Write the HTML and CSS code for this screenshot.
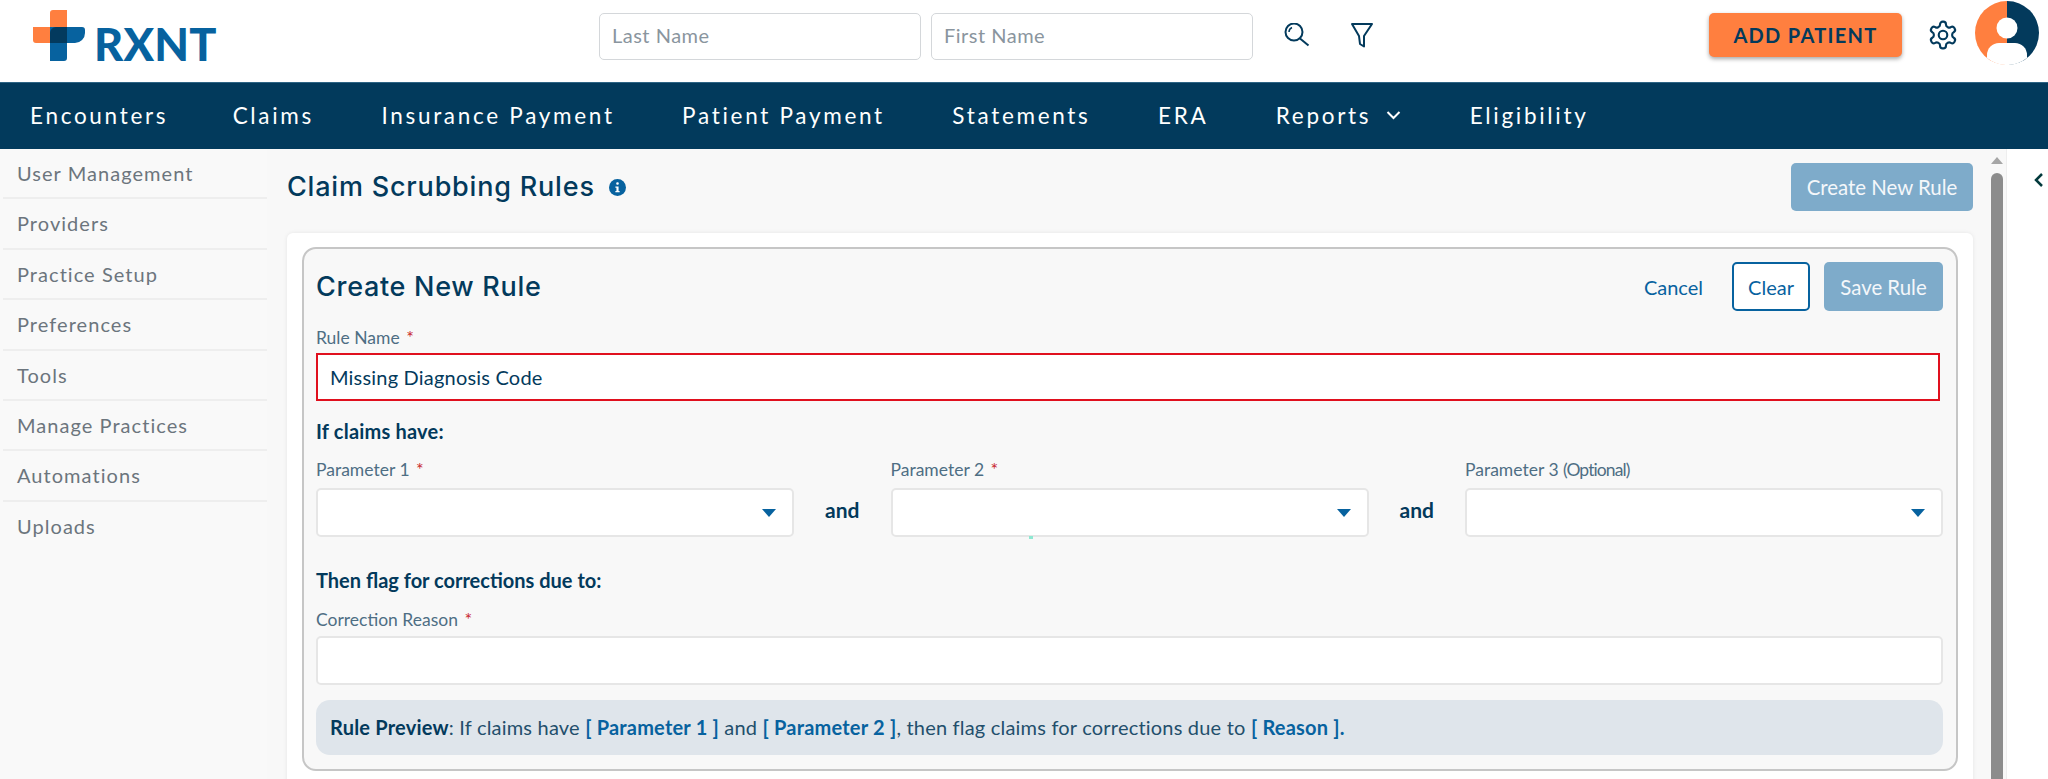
FILE: index.html
```html
<!DOCTYPE html>
<html lang="en">
<head>
<meta charset="utf-8">
<title>Claim Scrubbing Rules</title>
<link rel="stylesheet" href="styles.css">
</head>
<body>
<header class="topbar">
  <div class="logo">
    <svg class="logo-mark" width="52" height="51" viewBox="0 0 52 51">
      <path d="M17 3a3 3 0 0 1 3-3h14v33H3a3 3 0 0 1-3-3V17h17z" fill="#ff7f3f"/>
      <path d="M17 17h32a3 3 0 0 1 3 3v3a10 10 0 0 1-10 10h-8v15a3 3 0 0 1-3 3H17z" fill="#07629f"/>
      <path d="M17 23a6 6 0 0 1 6-6h11v16H17z" fill="#033a5e"/>
    </svg>
    <span class="logo-text">RXNT</span>
  </div>
  <div class="search">
    <input class="search-input" placeholder="Last Name">
    <input class="search-input" placeholder="First Name">
    <svg class="icon-search" width="28" height="28" viewBox="0 0 28 28" fill="none" stroke="#033a5c" stroke-width="2">
      <circle cx="12" cy="9" r="8.500"/><path d="M18 15.500l8.500 7"/><path d="M7 9a5 5 0 0 1 3-4.500" stroke-width="1.500"/>
    </svg>
    <svg class="icon-filter" width="24" height="28" viewBox="0 0 24 28" fill="none" stroke="#033a5c" stroke-width="2" stroke-linejoin="round">
      <path d="M2 1h20l-8 12v10.500l-4-2.500-1-8z"/>
    </svg>
  </div>
  <div class="top-actions">
    <button class="add-patient">ADD PATIENT</button>
    <svg class="icon-gear" width="32" height="32" viewBox="0 0 24 24" fill="none" stroke="#033a5c" stroke-width="1.600" stroke-linejoin="round">
      <path d="M12.220 2h-.44a2 2 0 0 0-2 2v.18a2 2 0 0 1-1 1.730l-.43.25a2 2 0 0 1-2 0l-.15-.08a2 2 0 0 0-2.730.73l-.22.38a2 2 0 0 0 .73 2.730l.15.1a2 2 0 0 1 1 1.720v.51a2 2 0 0 1-1 1.740l-.15.09a2 2 0 0 0-.73 2.730l.22.38a2 2 0 0 0 2.730.73l.15-.08a2 2 0 0 1 2 0l.43.25a2 2 0 0 1 1 1.730V20a2 2 0 0 0 2 2h.44a2 2 0 0 0 2-2v-.18a2 2 0 0 1 1-1.730l.43-.25a2 2 0 0 1 2 0l.15.08a2 2 0 0 0 2.730-.73l.22-.39a2 2 0 0 0-.73-2.730l-.15-.08a2 2 0 0 1-1-1.740v-.5a2 2 0 0 1 1-1.740l.15-.09a2 2 0 0 0 .73-2.730l-.22-.38a2 2 0 0 0-2.730-.73l-.15.08a2 2 0 0 1-2 0l-.43-.25a2 2 0 0 1-1-1.730V4a2 2 0 0 0-2-2z"/>
      <circle cx="12" cy="12" r="3.200"/>
    </svg>
    <svg class="avatar" width="64" height="64" viewBox="0 0 64 64">
      <path d="M32 0a32 32 0 0 0 0 64z" fill="#ff7f3f"/>
      <path d="M32 0a32 32 0 0 1 0 64z" fill="#033a5c"/>
      <circle cx="32" cy="27" r="10.500" fill="#fff"/>
      <path d="M12 57V54a12 12 0 0 1 12-12h16a12 12 0 0 1 12 12v3a32 32 0 0 1-40 0z" fill="#fff"/>
    </svg>
  </div>
</header>
<nav class="mainnav">
  <a class="nav-link">Encounters</a>
  <a class="nav-link">Claims</a>
  <a class="nav-link">Insurance Payment</a>
  <a class="nav-link">Patient Payment</a>
  <a class="nav-link">Statements</a>
  <a class="nav-link">ERA</a>
  <a class="nav-link">Reports
    <svg class="chev" width="16" height="10" viewBox="0 0 16 10" fill="none" stroke="#fff" stroke-width="2"><path d="M2 2l6 6 6-6"/></svg>
  </a>
  <a class="nav-link">Eligibility</a>
</nav>
<div class="body-row">
  <aside class="sidebar">
    <a class="side-item">User Management</a>
    <a class="side-item">Providers</a>
    <a class="side-item">Practice Setup</a>
    <a class="side-item">Preferences</a>
    <a class="side-item">Tools</a>
    <a class="side-item">Manage Practices</a>
    <a class="side-item">Automations</a>
    <a class="side-item last">Uploads</a>
  </aside>
  <main class="content">
    <div class="page-head">
      <h1 class="page-title">Claim Scrubbing Rules</h1>
      <svg class="info" width="17" height="17" viewBox="0 0 16 16">
        <circle cx="8" cy="8" r="8" fill="#07629f"/>
        <rect x="6.800" y="3" width="2.400" height="2.400" rx="1" fill="#fff"/>
        <path d="M6 7h3v4.200h1v1.300H6v-1.300h1V8.300H6z" fill="#fff"/>
      </svg>
      <button class="btn-solid btn-create">Create New Rule</button>
    </div>
    <section class="card">
      <div class="panel">
        <div class="panel-head">
          <h2 class="panel-title">Create New Rule</h2>
          <a class="btn-link">Cancel</a>
          <button class="btn-outline">Clear</button>
          <button class="btn-solid btn-save">Save Rule</button>
        </div>
        <label class="label first">Rule Name <span class="req">*</span></label>
        <input class="field field-error" value="Missing Diagnosis Code">
        <div class="section-label if-label">If claims have:</div>
        <div class="params">
          <div class="param">
            <label class="label">Parameter 1 <span class="req">*</span></label>
            <div class="field select"><span class="caret"></span></div>
          </div>
          <div class="and">and</div>
          <div class="param">
            <label class="label">Parameter 2 <span class="req">*</span></label>
            <div class="field select"><span class="caret"></span><span class="speck"></span></div>
          </div>
          <div class="and">and</div>
          <div class="param">
            <label class="label">Parameter 3 <span class="optional">(Optional)</span></label>
            <div class="field select"><span class="caret"></span></div>
          </div>
        </div>
        <div class="section-label then-label">Then flag for corrections due to:</div>
        <label class="label reason-label">Correction Reason <span class="req">*</span></label>
        <input class="field">
        <div class="preview"><b>Rule Preview</b>: If claims have <b class="ph">[ Parameter 1 ]</b> and <b class="ph">[ Parameter 2 ]</b>, then flag claims for corrections due to <b class="ph">[ Reason ].</b></div>
      </div>
    </section>
  </main>
  <div class="scrollbar">
    <span class="scroll-up"></span>
    <span class="scroll-thumb"></span>
  </div>
  <aside class="rightpanel">
    <svg width="10" height="16" viewBox="0 0 10 16" fill="none" stroke="#023a3c" stroke-width="2.500"><path d="M8 2L2 8l6 6"/></svg>
  </aside>
</div>
</body>
</html>
```

FILE: styles.css
```css
* { box-sizing: border-box; }
html, body { margin: 0; height: 779px; overflow: hidden; }
body { font-family: "Lato", "Noto Sans", sans-serif; color: #033a5c; background: #fff; display: flex; flex-direction: column; }
h1, h2 { margin: 0; font-weight: 500; }

.topbar { height: 82px; flex: none; display: flex; align-items: center; padding-bottom: 12px; background: #fff; }
.logo { display: flex; align-items: flex-end; width: 599px; padding-left: 33px; flex: none; }
.logo-mark { flex: none; }
.logo-text { font-family: "Lato", sans-serif; font-weight: 900; font-size: 45px; line-height: 33px; color: #07629f; margin-left: 9px; letter-spacing: 0.2px; }
.search { display: flex; align-items: center; gap: 10px; flex: none; margin-top: 3px; }
.search-input { width: 322px; height: 47px; border: 1px solid #d4d7da; border-radius: 5px; padding: 0 12px 3px; font: 20px "Lato", sans-serif; letter-spacing: .5px; background: #fff; }
.search-input::placeholder { color: #8a959e; opacity: 1; }
.icon-search { margin-left: 19px; }
.icon-filter { margin-left: 30px; }
.top-actions { margin-left: auto; display: flex; align-items: center; padding-right: 9px; }
.add-patient { width: 193px; height: 44px; border: 0; border-radius: 5px; background: #ff7f3f; color: #033a5c; font: 700 20px "Lato", sans-serif; letter-spacing: 1.300px; box-shadow: 0 2px 4px rgba(0,0,0,.35); }
.icon-gear { margin-left: 25px; }
.avatar { margin: -4px 0 0 16px; }

.mainnav { height: 67px; flex: none; display: flex; align-items: center; padding: 0 0 2px 30px; gap: 67.400px; background: #023a5c; border-top: 1px solid #2d6485; }
.nav-link { color: #fff; font-size: 22.500px; letter-spacing: 2.700px; display: flex; align-items: center; gap: 14px; }
.nav-link:first-child { margin-right: -3px; }
.chev { width: 17px; }

.body-row { flex: 1; display: flex; min-height: 0; background: #f8f8f8; }
.sidebar { width: 267px; flex: none; padding-left: 3px; background: #f9f9f9; }
.side-item { display: block; height: 50.400px; border-bottom: 2px solid #eeeeee; padding: 11px 0 0 14px; font-size: 20px; line-height: 26px; letter-spacing: 1.050px; color: #6c757d; }
.side-item.last { border-bottom: 0; }

.content { width: 1721px; flex: none; padding: 14px 15px 0 20px; background: #f8f8f8; }
.page-head { display: flex; align-items: center; height: 48px; }
.page-title { font-family: "Inter", sans-serif; font-size: 27px; letter-spacing: .8px; line-height: 32px; color: #033a5c; }
.info { margin-left: 14px; }
.btn-solid { border: 0; border-radius: 5px; background: #7eabca; color: #f4f7fa; font: 20.400px "Lato", sans-serif; }
.btn-create { width: 182px; height: 48px; margin-left: auto; }

.card { margin-top: 22px; height: 560px; background: #fff; border-radius: 6px; padding: 14px 15px 0; box-shadow: 0 0 4px rgba(0,0,0,.08); }
.panel { height: 524px; border: 2px solid #c6c6c6; border-radius: 14px; background: #f8f8f8; padding: 13px 13px 0 12px; }

.panel-head { display: flex; align-items: center; height: 49px; }
.panel-title { font-family: "Inter", sans-serif; font-size: 27px; letter-spacing: .7px; color: #033a5c; }
.btn-link { margin-left: auto; color: #07629f; font-size: 20px; }
.btn-outline { width: 78px; height: 49px; margin-left: 29px; border: 2px solid #07629f; border-radius: 5px; background: #fff; color: #07629f; font: 20px "Lato", sans-serif; }
.btn-save { width: 119px; height: 49px; margin-left: 14px; }

.label { display: block; font-size: 17.500px; line-height: 20px; color: #4e6e84; height: 28px; }
.label.first { margin-top: 17px; height: 25px; }
.req { color: #c8272d; font-size: 18px; margin-left: 2px; line-height: 16px; }
.optional { letter-spacing: -.9px; }
.field { display: block; width: 100%; height: 49px; border: 2px solid #e6e6e6; border-radius: 5px; background: #fff; font: 20px "Lato", sans-serif; letter-spacing: .2px; color: #033a5c; padding: 0 12px; outline: 0; }
.field-error { width: calc(100% - 3px); height: 48px; border: 2px solid #e0101e; border-radius: 0; }
.section-label { font-size: 20px; font-weight: 700; line-height: 24px; color: #033a5c; }
.if-label { margin-top: 18px; letter-spacing: .2px; }
.params { display: flex; margin-top: 17px; align-items: flex-start; }
.param { flex: 1; }
.and { width: 96.500px; flex: none; padding-top: 38px; text-align: center; font-size: 21px; font-weight: 700; line-height: 24px; }
.select { position: relative; display: flex; align-items: center; justify-content: flex-end; padding-right: 16px; }
.caret { width: 0; height: 0; border-left: 7px solid transparent; border-right: 7px solid transparent; border-top: 8px solid #07629f; }
.speck { position: absolute; left: 136px; bottom: -4px; width: 4px; height: 3px; background: #8fe8d2; }
.then-label { margin-top: 31px; }
.reason-label { margin-top: 18px; height: 26px; }
.preview { margin-top: 15px; height: 55px; padding: 0 14px; line-height: 55px; white-space: nowrap; border-radius: 14px; background: #dfe5eb; font-size: 20px; letter-spacing: .2px; color: #234f6c; }
.preview b { font-weight: 700; color: #033a5c; }
.preview .ph { color: #07629f; }

.scrollbar { width: 18px; flex: none; display: flex; flex-direction: column; align-items: center; padding-top: 8px; background: #f8f8f8; }
.scroll-up { width: 0; height: 0; border-left: 6px solid transparent; border-right: 6px solid transparent; border-bottom: 7px solid #a6a6a6; }
.scroll-thumb { width: 12px; flex: 1; margin-top: 9px; border-radius: 6px 6px 0 0; background: #8c8c8c; }
.rightpanel { width: 42px; flex: none; background: #fff; padding: 23px 0 0 27px; border-left: 1px solid #eee; }
```
